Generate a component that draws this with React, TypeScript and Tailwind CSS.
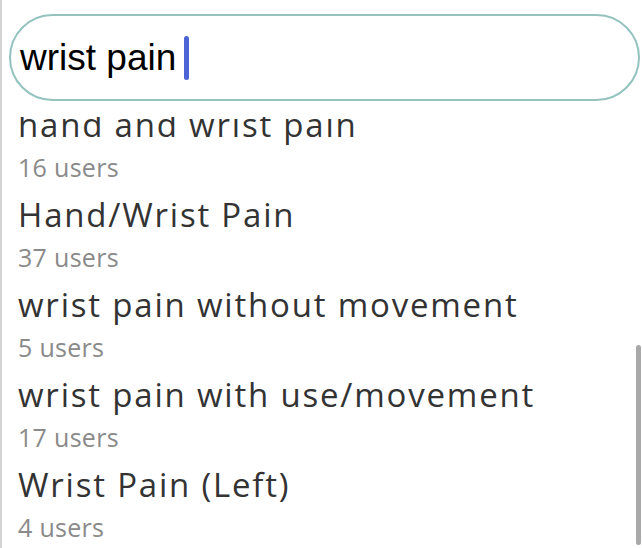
const RESULTS = [
  { name: 'hand and wrist pain', count: 16 },
  { name: 'Hand/Wrist Pain', count: 37 },
  { name: 'wrist pain without movement', count: 5 },
  { name: 'wrist pain with use/movement', count: 17 },
  { name: 'Wrist Pain (Left)', count: 4 },
];

export default function App() {
  return (
    <div className="relative h-[548px] w-[642px] overflow-hidden bg-white border-l-2 border-[#d4d4d4]">
      <div className="pt-[14px] pl-[7px] pr-[2px]">
        <div className="flex h-[87px] items-center rounded-full border-2 border-[#94c3bf] pl-[9px]">
          <span className="font-['Liberation_Sans',sans-serif] text-[37px] text-black">wrist pain</span>
          <span className="ml-[8px] h-[44px] w-[5px] rounded-full bg-[#4c64d4]" />
        </div>
      </div>

      <div className="mt-[16px] h-[431px] overflow-hidden">
        <div className="-mt-[14px] pl-[16px] font-['Open_Sans',sans-serif]">
          {RESULTS.map((r) => (
            <div key={r.name} className="flex h-[90px] flex-col">
              <span className="text-[33px] leading-[44px] tracking-[1.8px] text-[#333]">{r.name}</span>
              <span className="text-[25px] leading-[40px] tracking-[0.3px] text-[#8a8a8a]">{r.count} users</span>
            </div>
          ))}
        </div>
      </div>

      <div className="absolute right-[1px] top-[345px] h-[200px] w-[5px] rounded-full bg-[#a9a9a9]" />
    </div>
  );
}
